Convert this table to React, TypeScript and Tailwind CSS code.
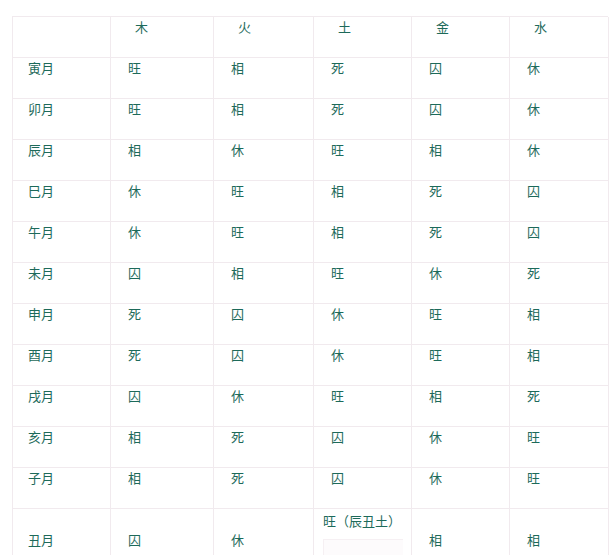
const header = ["木", "火", "土", "金", "水"];

const rows: [string, string[]][] = [
  ["寅月", ["旺", "相", "死", "囚", "休"]],
  ["卯月", ["旺", "相", "死", "囚", "休"]],
  ["辰月", ["相", "休", "旺", "相", "休"]],
  ["巳月", ["休", "旺", "相", "死", "囚"]],
  ["午月", ["休", "旺", "相", "死", "囚"]],
  ["未月", ["囚", "相", "旺", "休", "死"]],
  ["申月", ["死", "囚", "休", "旺", "相"]],
  ["酉月", ["死", "囚", "休", "旺", "相"]],
  ["戌月", ["囚", "休", "旺", "相", "死"]],
  ["亥月", ["相", "死", "囚", "休", "旺"]],
  ["子月", ["相", "死", "囚", "休", "旺"]],
];

const cell = "border-r border-b border-[#f1eaee] h-[41px] leading-5";

export default function App() {
  return (
    <div
      className="w-[615px] h-[555px] overflow-hidden bg-white text-[13px] text-[#1d6a5a]"
      style={{ fontFamily: '"Noto Sans CJK SC", "Noto Sans", sans-serif' }}
    >
      <div className="pt-4 pl-3">
        <div className="grid grid-cols-[98px_103px_100px_98px_98px_99px] border-l border-t border-[#f1eaee] w-[596px]">
          {/* header */}
          <div className={cell} />
          {header.map((h) => (
            <div key={h} className={`${cell} pl-6`}>
              {h}
            </div>
          ))}

          {rows.map(([label, vals]) => (
            <div key={label} className="contents">
              <div className={`${cell} pl-[15px]`}>{label}</div>
              {vals.map((v, i) => (
                <div key={i} className={`${cell} pl-[17px]`}>
                  {v}
                </div>
              ))}
            </div>
          ))}

          {/* last row */}
          <div className="border-r border-[#f1eaee] h-[70px] pt-[21px] leading-5 pl-[15px]">丑月</div>
          <div className="border-r border-[#f1eaee] h-[70px] pt-[21px] leading-5 pl-[17px]">囚</div>
          <div className="border-r border-[#f1eaee] h-[70px] pt-[21px] leading-5 pl-[17px]">休</div>
          <div className="border-r border-[#f1eaee] h-[70px] pt-[2px] leading-5 pl-[9px]">
            旺（辰丑土）
            <div className="mt-[8px] mr-2 h-[30px] border-t border-l border-[#f6f0f3] bg-[#fdfbfc]" />
          </div>
          <div className="border-r border-[#f1eaee] h-[70px] pt-[21px] leading-5 pl-[17px]">相</div>
          <div className="border-r border-[#f1eaee] h-[70px] pt-[21px] leading-5 pl-[17px]">相</div>
        </div>
      </div>
    </div>
  );
}
